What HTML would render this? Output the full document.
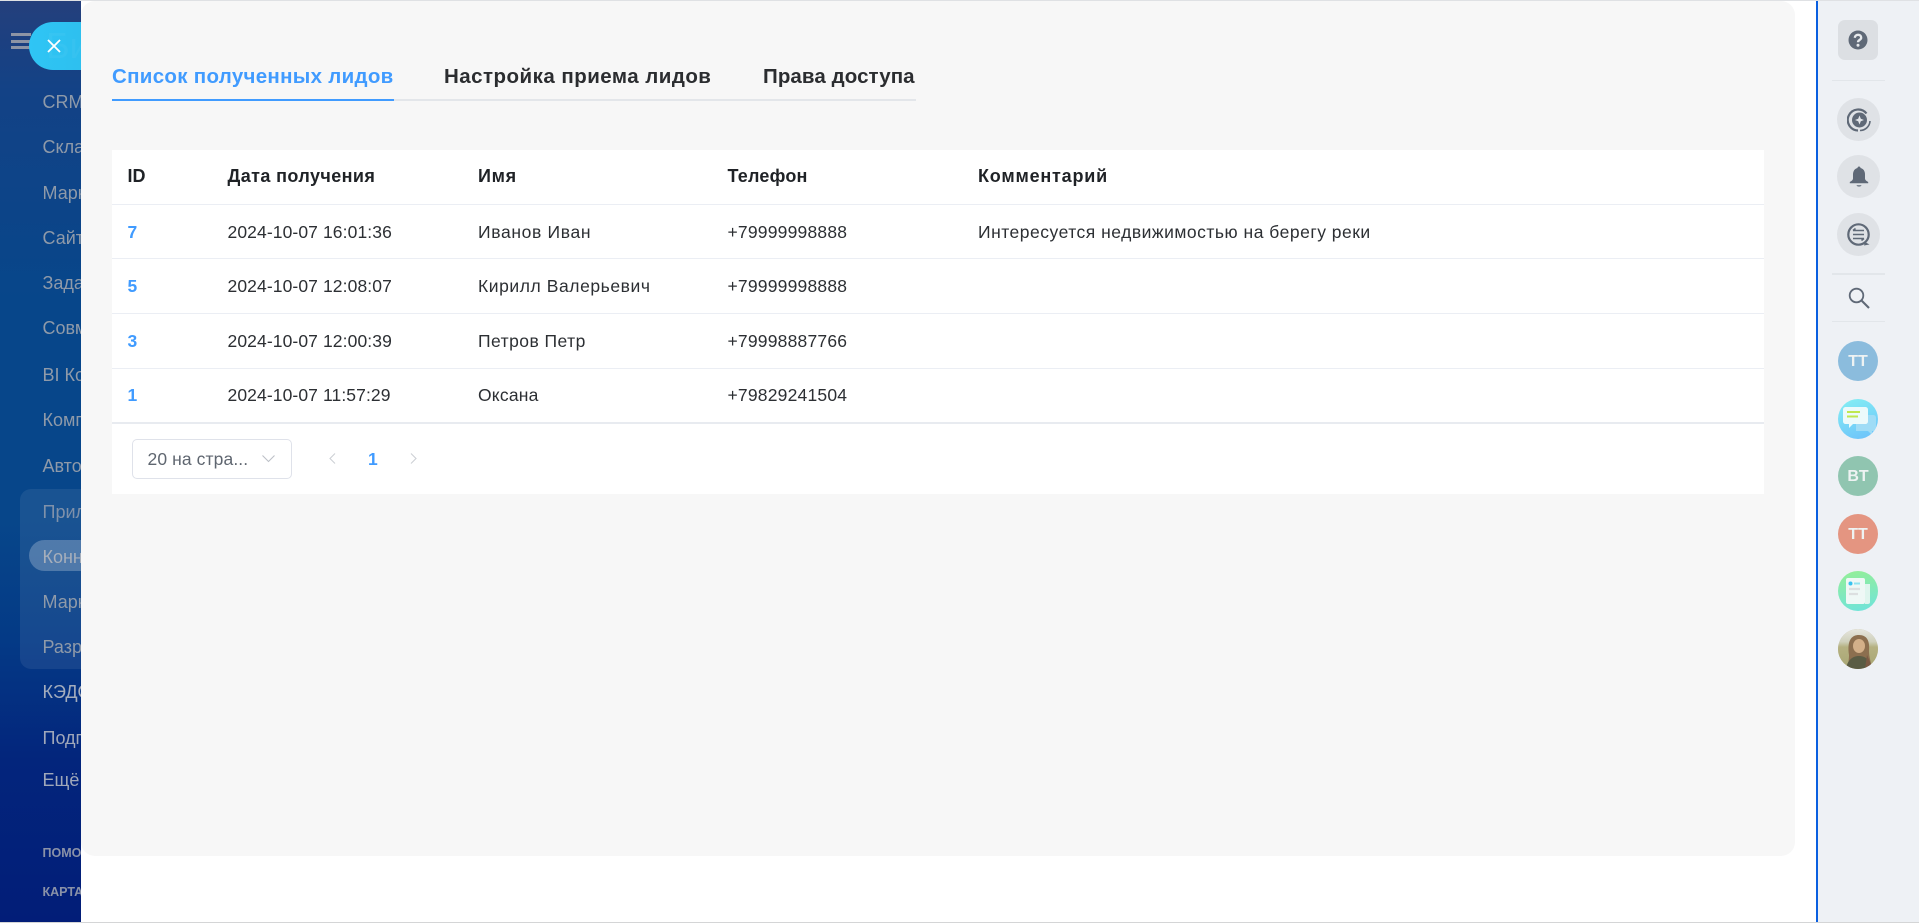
<!DOCTYPE html>
<html lang="ru"><head><meta charset="utf-8"><title>Лиды</title>
<style>
*{box-sizing:border-box;margin:0;padding:0}
html,body{width:1919px;height:923px;overflow:hidden;background:#fff;font-family:"Liberation Sans",sans-serif}
.a{position:absolute;white-space:nowrap}
#side{left:0;top:0;width:81px;height:923px;overflow:hidden;background:linear-gradient(180deg,#243f7c 0,#134286 90px,#07468a 300px,#07468a 520px,#043a86 640px,#03257c 760px,#021d78 923px)}
#side .i{position:absolute;left:42.500px;font-size:18px;line-height:24px;color:#8f9aa9;white-space:nowrap;transform:translateY(-12px)}
#side .s{position:absolute;left:42.500px;font-size:12.5px;font-weight:bold;line-height:16px;color:#8a92a8;white-space:nowrap;transform:translateY(-8px)}
.t{position:absolute;font-size:17.5px;line-height:24px;color:#2c2f33;white-space:nowrap;transform:translateY(-12px)}
.r{margin-top:1px}
.h{font-weight:bold;font-size:18px;color:#1f2226}
.b{font-weight:bold;color:#409bff}
.l{position:absolute;left:112px;width:1652px;height:1px;background:#ebeef4}
.tab{position:absolute;top:63px;font-size:20.5px;line-height:28px;font-weight:bold;color:#2b2d30;white-space:nowrap}
.sep{position:absolute;left:1832px;width:53px;height:1px;background:#e2e6ea}
.ci{position:absolute;left:1837px;width:43px;height:43px;border-radius:50%;background:#dfe2e6}
.av{position:absolute;left:1838px;width:40px;height:40px;border-radius:50%;color:#eef3f3;font-weight:bold;font-size:16px;line-height:42px;text-align:center;overflow:hidden}
</style></head><body>

<div class="a" id="side">
  <div class="a" style="left:11px;top:33px;width:20px;height:3px;background:#8d94a5"></div>
  <div class="a" style="left:11px;top:40px;width:20px;height:3px;background:#8d94a5"></div>
  <div class="a" style="left:11px;top:46px;width:20px;height:3px;background:#8d94a5"></div>
  <div class="a" style="left:20px;top:489px;width:80px;height:180px;border-radius:11px;background:rgba(255,255,255,.075)"></div>
  <div class="a" style="left:29px;top:540px;width:80px;height:31px;border-radius:16px;background:rgba(255,255,255,.24)"></div>
  <div class="i" style="top:102px">CRM</div>
  <div class="i" style="top:147px">Склад</div>
  <div class="i" style="top:193px">Маркетинг</div>
  <div class="i" style="top:238px">Сайты</div>
  <div class="i" style="top:283px">Задачи</div>
  <div class="i" style="top:328px">Совместная</div>
  <div class="i" style="top:375px">BI Конструктор</div>
  <div class="i" style="top:420px">Компания</div>
  <div class="i" style="top:466px">Автоматизация</div>
  <div class="i" style="top:512px;color:#7f91aa">Приложения</div>
  <div class="i" style="top:557px;color:#a7afbb">Коннекторы</div>
  <div class="i" style="top:602px">Маркет</div>
  <div class="i" style="top:647px">Разработчикам</div>
  <div class="i" style="top:692px;color:#a4adbd">КЭДО</div>
  <div class="i" style="top:738px;color:#a0a8ba">Подписка</div>
  <div class="i" style="top:780px;color:#a0a8ba">Ещё</div>
  <div class="s" style="top:853px">ПОМОЩЬ</div>
  <div class="s" style="top:892px">КАРТА САЙТА</div>
  <div class="a" style="left:29px;top:22px;width:60px;height:48px;border-radius:24px 0 0 24px;background:linear-gradient(90deg,#2fc5f5,#2ebfee)"></div>
  <div class="a" style="left:46px;top:24px;font-size:36px;line-height:44px;color:rgba(255,255,255,.04)">Би</div>
  <svg class="a" style="left:47px;top:39px" width="14" height="14" viewBox="0 0 14 14"><path d="M1 1L13 13M13 1L1 13" stroke="#fff" stroke-width="1.8" fill="none"/></svg>
</div>

<div class="a" style="left:0;top:0;width:1919px;height:1px;background:#dfe1e4"></div>
<div class="a" style="left:81px;top:1px;width:1735px;height:921px;background:#fff;border-radius:14px"></div>
<div class="a" style="left:81px;top:1px;width:1714px;height:855px;background:#f7f7f7;border-radius:14px"></div>

<div class="tab" style="left:112px;color:#409bff;letter-spacing:.3px">Список полученных лидов</div>
<div class="tab" style="left:444px;letter-spacing:.47px">Настройка приема лидов</div>
<div class="tab" style="left:763px;letter-spacing:.09px">Права доступа</div>
<div class="a" style="left:112px;top:99px;width:804px;height:2px;background:#e3e6ea"></div>
<div class="a" style="left:112px;top:99px;width:282px;height:2px;background:#409bff"></div>

<div class="a" style="left:112px;top:150px;width:1652px;height:344px;background:#fff"></div>
<div class="l" style="top:204px"></div><div class="l" style="top:258px"></div><div class="l" style="top:313px"></div><div class="l" style="top:368px"></div>
<div class="l" style="top:422px;height:2px;background:#e8ebf0"></div>

<div class="t h" style="left:127.500px;top:176px">ID</div>
<div class="t h" style="left:227.500px;top:176px;letter-spacing:.4px">Дата получения</div>
<div class="t h" style="left:478px;top:176px;letter-spacing:.7px">Имя</div>
<div class="t h" style="left:727.500px;top:176px;letter-spacing:.2px">Телефон</div>
<div class="t h" style="left:978px;top:176px;letter-spacing:.8px">Комментарий</div>

<div class="t b r" style="left:127.500px;top:231px">7</div>
<div class="t r" style="left:227.500px;top:231px;letter-spacing:.1px">2024-10-07 16:01:36</div>
<div class="t r" style="left:478px;top:231px;letter-spacing:.65px">Иванов Иван</div>
<div class="t r" style="left:727.500px;top:231px;letter-spacing:.2px">+79999998888</div>
<div class="t r" style="left:978px;top:231px;letter-spacing:.5px">Интересуется недвижимостью на берегу реки</div>

<div class="t b" style="left:127.500px;top:286px">5</div>
<div class="t" style="left:227.500px;top:286px;letter-spacing:.1px">2024-10-07 12:08:07</div>
<div class="t" style="left:478px;top:286px;letter-spacing:.57px">Кирилл Валерьевич</div>
<div class="t" style="left:727.500px;top:286px;letter-spacing:.2px">+79999998888</div>

<div class="t b" style="left:127.500px;top:341px">3</div>
<div class="t" style="left:227.500px;top:341px;letter-spacing:.1px">2024-10-07 12:00:39</div>
<div class="t" style="left:478px;top:341px;letter-spacing:.45px">Петров Петр</div>
<div class="t" style="left:727.500px;top:341px;letter-spacing:.2px">+79998887766</div>

<div class="t b" style="left:127.500px;top:395px">1</div>
<div class="t" style="left:227.500px;top:395px;letter-spacing:.1px">2024-10-07 11:57:29</div>
<div class="t" style="left:478px;top:395px;letter-spacing:.2px">Оксана</div>
<div class="t" style="left:727.500px;top:395px;letter-spacing:.2px">+79829241504</div>

<div class="a" style="left:132px;top:439px;width:160px;height:40px;border:1px solid #dfe2ea;border-radius:5px;background:#fff"></div>
<div class="t" style="left:147.500px;top:459px;color:#5f6670;letter-spacing:.1px">20 на стра...</div>
<svg class="a" style="left:261px;top:454px" width="15" height="10" viewBox="0 0 15 10"><path d="M1.500 1.500L7.500 7.500L13.500 1.500" stroke="#bcc0c7" stroke-width="1.1" fill="none"/></svg>
<svg class="a" style="left:328px;top:452px" width="9" height="13" viewBox="0 0 9 13"><path d="M7 1.500L2 6.500L7 11.500" stroke="#cdd0d5" stroke-width="1.100" fill="none"/></svg>
<div class="t b" style="left:368px;top:459px">1</div>
<svg class="a" style="left:409px;top:452px" width="9" height="13" viewBox="0 0 9 13"><path d="M2 1.500L7 6.500L2 11.500" stroke="#cdd0d5" stroke-width="1.100" fill="none"/></svg>

<div class="a" style="left:1817px;top:1px;width:102px;height:921px;background:#eef1f5"></div>
<div class="a" style="left:1816px;top:1px;width:1.500px;height:921px;background:#0a5fe0"></div>
<div class="a" style="left:0;top:922px;width:1919px;height:1px;background:#d4d5d6"></div>

<div class="a" style="left:1838px;top:20px;width:40px;height:40px;border-radius:7px;background:#dcdfe3"></div>
<svg class="a" style="left:1848px;top:30px" width="20" height="20" viewBox="0 0 20 20"><circle cx="10" cy="10" r="9.500" fill="#5f6977"/><path d="M6.800 7.800c.2-4 6.500-4 6.400 0 0 2.200-3.200 2-3.200 4.400" stroke="#e6e9ec" stroke-width="2.300" fill="none"/><circle cx="10" cy="15.200" r="1.500" fill="#e6e9ec"/></svg>
<div class="sep" style="top:80px"></div>

<div class="ci" style="top:98px"></div>
<svg class="a" style="left:1847px;top:108px" width="24" height="24" viewBox="0 0 24 24"><path d="M19.500 5.500A10.500 10.500 0 1 0 11 22.500" stroke="#5f6977" stroke-width="2.200" fill="none"/><path d="M23 13a10 10 0 0 1-10 9.500" stroke="#5f6977" stroke-width="1.600" fill="none"/><circle cx="12.500" cy="12" r="7.500" fill="#5f6977"/><path d="M12.500 7.500l1.300 3.200 3.200 1.300-3.200 1.300-1.300 3.200-1.300-3.200-3.200-1.300 3.200-1.300z" fill="#e3e6ea"/></svg>

<div class="ci" style="top:155px"></div>
<svg class="a" style="left:1849px;top:166px" width="20" height="22" viewBox="0 0 20 22"><path d="M10 .500c1 0 1.500.7 1.500 1.500 3 .8 4.500 3.200 4.500 6.500v4c0 1.500 1.500 2.500 3.200 3.500v1.200H.800V16c1.700-1 3.200-2 3.200-3.500v-4c0-3.300 1.500-5.700 4.500-6.500C8.500 1.200 9 .500 10 .500z" fill="#5f6977"/><path d="M7.500 19.200h5c-.5 1.800-4.500 1.800-5 0z" fill="#5f6977"/></svg>

<div class="ci" style="top:213px"></div>
<svg class="a" style="left:1847px;top:223px" width="24" height="24" viewBox="0 0 24 24"><circle cx="11.500" cy="11.500" r="10.200" fill="none" stroke="#5f6977" stroke-width="2.200"/><path d="M18 19l4.500 2.500-5.500 1z" fill="#5f6977"/><path d="M6 7.500h11M6 7.500l2.500-2M6 11.500h11M6 15.500h11M17 15.500l-2.500 2" stroke="#5f6977" stroke-width="1.500" fill="none"/></svg>

<div class="sep" style="top:273px;height:2px"></div>
<svg class="a" style="left:1848px;top:287px" width="23" height="23" viewBox="0 0 23 23"><circle cx="8.500" cy="8.500" r="6.800" fill="none" stroke="#5f6977" stroke-width="1.800"/><path d="M13.500 13.500L21 21" stroke="#5f6977" stroke-width="2.100"/></svg>
<div class="sep" style="top:321px"></div>

<div class="av" style="top:341px;background:#8bbcdd">TT</div>
<div class="av" style="top:399px;background:linear-gradient(160deg,#85f0f3,#6cc0fb)">
  <svg width="40" height="40" viewBox="0 0 40 40" style="display:block"><path d="M18 16h17c2 0 3 1 3 3v10c0 2-1 3-3 3h-1v4l-4-4H18z" fill="#9fdcf6"/><path d="M8 8h19c2 0 3 1 3 3v11c0 2-1 3-3 3H15l-4 4 0-4H8c-2 0-3-1-3-3V11c0-2 1-3 3-3z" fill="#ecfafb"/><path d="M9 13h13M9 17.500h11" stroke="#bfe84f" stroke-width="2"/></svg>
</div>
<div class="av" style="top:456px;background:#90c5b0">BT</div>
<div class="av" style="top:514px;background:#e49581">TT</div>
<div class="av" style="top:571px;background:linear-gradient(170deg,#95ef96,#6ee3dd)">
  <svg width="40" height="40" viewBox="0 0 40 40" style="display:block"><rect x="8" y="7" width="19" height="26" rx="2" fill="#eff8f6"/><path d="M27 13h5v18c0 1.500-1 2-2.500 2H27z" fill="#dff5ee"/><circle cx="12.500" cy="12.500" r="2" fill="#38c3f0"/><path d="M16 12.500h6" stroke="#8fe3f0" stroke-width="2"/><path d="M11 18h11M11 23h9" stroke="#dcdfe0" stroke-width="2.200"/></svg>
</div>
<div class="av" style="top:629px;background:#b8b087">
  <svg width="40" height="40" viewBox="0 0 40 40" style="display:block"><defs><linearGradient id="g" x1="0" y1="0" x2="0" y2="1"><stop offset="0" stop-color="#e6e6de"/><stop offset=".32" stop-color="#cfd0bb"/><stop offset=".45" stop-color="#b5b181"/><stop offset="1" stop-color="#a8a674"/></linearGradient></defs><rect width="40" height="40" fill="url(#g)"/><path d="M11 26c-2-14 2-20 10-20s11 6 10 16c0 6 2 11 3 18H10c0-6 1-9 1-14z" fill="#8c6f4f"/><ellipse cx="21" cy="17" rx="6" ry="7" fill="#d3b089"/><path d="M8 40c1-8 6-13 13-13s12 5 13 13z" fill="#5a5c44"/><path d="M29 26l6 14h-8z" fill="#7b5a44"/></svg>
</div>
</body></html>
